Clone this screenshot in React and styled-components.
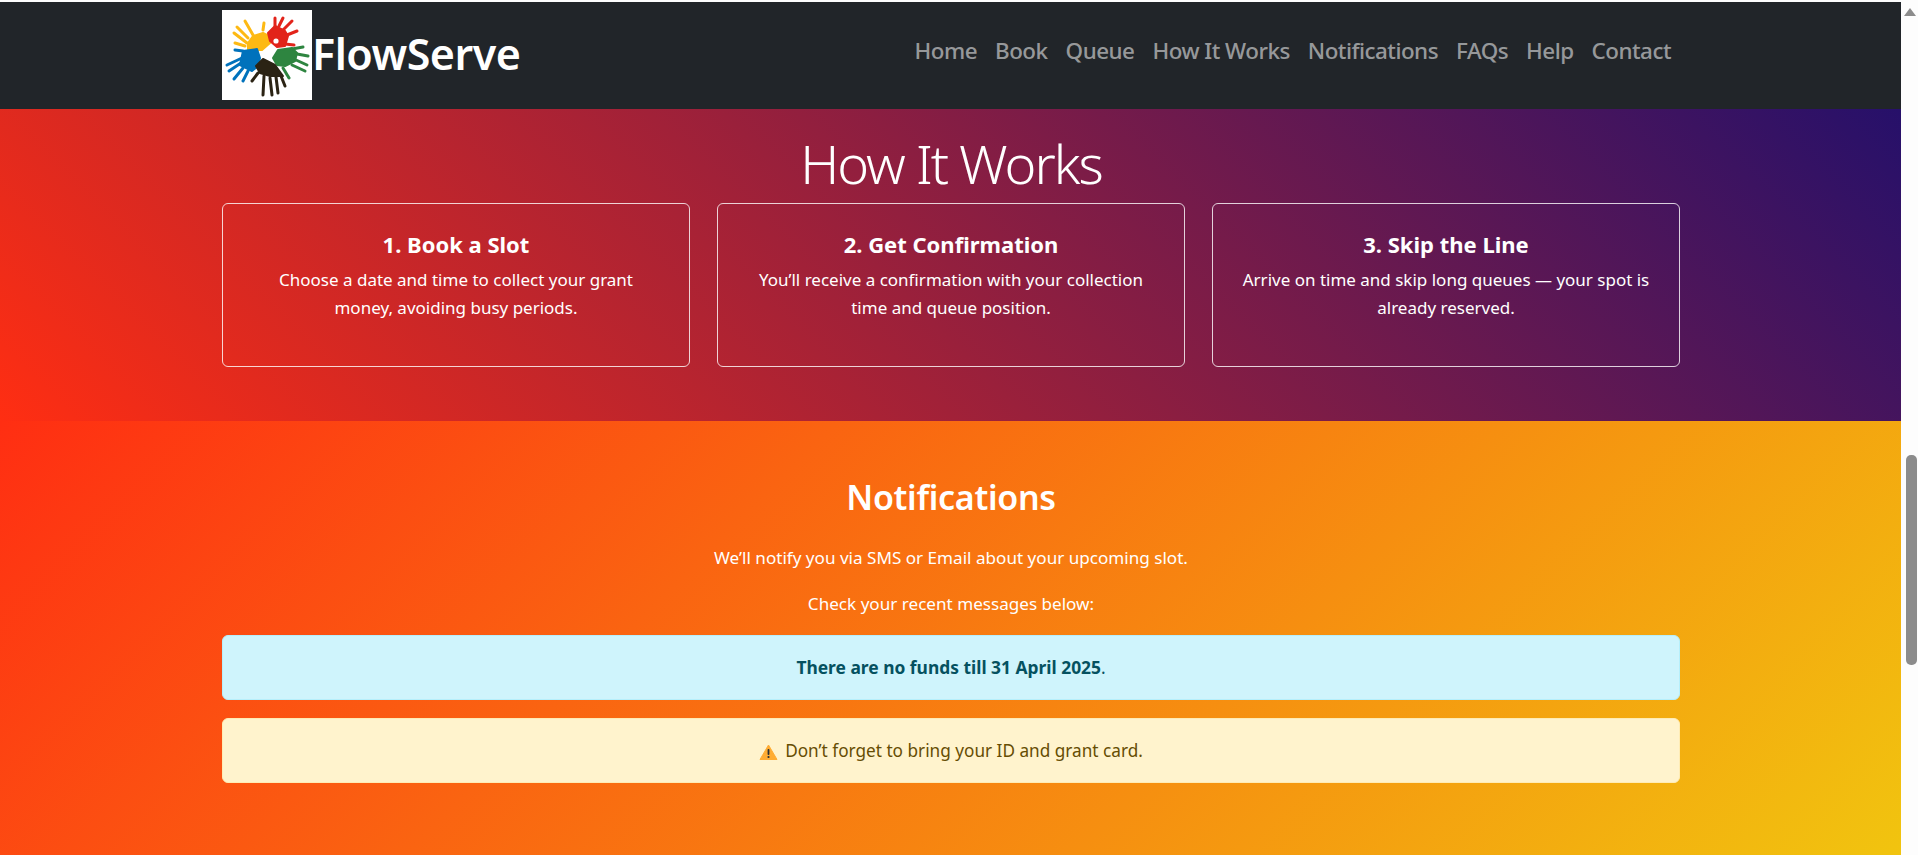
import styled, { createGlobalStyle } from 'styled-components'

const GlobalStyle = createGlobalStyle`
  html, body {
    margin: 0;
    height: 100%;
    overflow: hidden;
    background: #fdfdfd;
  }
  * {
    box-sizing: border-box;
  }
`

const navLinks = ['Home', 'Book', 'Queue', 'How It Works', 'Notifications', 'FAQs', 'Help', 'Contact']

const steps = [
  {
    title: '1. Book a Slot',
    lines: ['Choose a date and time to collect your grant', 'money, avoiding busy periods.'],
  },
  {
    title: '2. Get Confirmation',
    lines: ['You’ll receive a confirmation with your collection', 'time and queue position.'],
  },
  {
    title: '3. Skip the Line',
    lines: ['Arrive on time and skip long queues — your spot is', 'already reserved.'],
  },
]

//#region logo hands, traced from the reference
const hands = [
  {
    color: '#fdb913',
    palm: '26,33 31,26 41,23 45,25 48,33 40,40 26,40',
    fingers: [[31, 25, 23, 11], [26, 28, 15, 17], [25, 33, 12, 23], [23, 36, 13, 33], [41, 20, 42, 13]],
  },
  {
    color: '#e2231a',
    palm: '46,23 53,16 63,21 66,26 63,36 55,37 48,31',
    fingers: [[53, 16, 53, 8], [57, 16, 61, 8], [61, 20, 70, 11], [65, 25, 75, 21], [63, 34, 72, 35]],
  },
  {
    color: '#2e8540',
    palm: '51,48 56,40 70,38 75,43 73,51 63,56 55,55',
    fingers: [[70, 39, 81, 37], [75, 44, 86, 46], [74, 50, 85, 55], [70, 55, 83, 61], [61, 58, 67, 68]],
  },
  {
    color: '#0072bc',
    palm: '21,41 35,39 38,48 36,56 30,61 18,55',
    fingers: [[20, 48, 5, 55], [19, 53, 7, 61], [21, 58, 12, 69], [26, 61, 21, 71], [21, 41, 13, 40]],
  },
  {
    color: '#2b2314',
    palm: '34,56 41,49 53,55 61,66 48,66 38,63',
    fingers: [[42, 66, 41, 85], [48, 68, 50, 85], [54, 67, 56, 83], [59, 66, 63, 76], [36, 63, 30, 71]],
  },
]
//#endregion

function Logo() {
  return (
    <LogoBox viewBox="0 0 90 90" aria-label="FlowServe logo">
      {hands.map(({ color, palm, fingers }) => (
        <g key={color} fill={color} stroke={color} strokeLinecap="round" strokeLinejoin="round">
          <polygon points={palm} strokeWidth="2" />
          {fingers.map(([x1, y1, x2, y2]) => (
            <line key={`${x2}-${y2}`} x1={x1} y1={y1} x2={x2} y2={y2} strokeWidth="3" />
          ))}
        </g>
      ))}
      <circle cx="54" cy="31" r="2.6" fill="#fff" />
    </LogoBox>
  )
}

function WarningIcon() {
  return (
    <WarnSvg viewBox="0 0 18 16">
      <path d="M9 1 L17.5 15.5 L0.5 15.5 Z" fill="#ffac33" stroke="#ffac33" strokeLinejoin="round" />
      <rect x="8.1" y="5" width="1.8" height="6" rx="0.8" fill="#292f33" />
      <circle cx="9" cy="13" r="1.1" fill="#292f33" />
    </WarnSvg>
  )
}

export default function App() {
  return (
    <>
      <GlobalStyle />
      <Viewport>
        <Main>
          <Navbar>
            <Brand>
              <Logo />
              <BrandName>FlowServe</BrandName>
            </Brand>
            <NavList>
              {navLinks.map((label) => (
                <NavLink key={label}>{label}</NavLink>
              ))}
            </NavList>
          </Navbar>
          <HowSection>
            <HowTitle>How It Works</HowTitle>
            <CardGrid>
              {steps.map(({ title, lines }) => (
                <StepCard key={title}>
                  <StepTitle>{title}</StepTitle>
                  {lines.map((line) => (
                    <StepLine key={line}>{line}</StepLine>
                  ))}
                </StepCard>
              ))}
            </CardGrid>
          </HowSection>
          <NotifySection>
            <NotifyTitle>Notifications</NotifyTitle>
            <NotifyText>We’ll notify you via SMS or Email about your upcoming slot.</NotifyText>
            <NotifyText>Check your recent messages below:</NotifyText>
            <Alert $kind="info">
              <AlertStrong>There are no funds till 31 April 2025</AlertStrong>.
            </Alert>
            <Alert $kind="warning">
              <WarningIcon />Don’t forget to bring your ID and grant card.
            </Alert>
          </NotifySection>
        </Main>
        <ScrollRail>
          <ScrollArrow />
          <ScrollThumb />
        </ScrollRail>
      </Viewport>
    </>
  )
}

const alertColors = {
  info: { bg: '#cff4fc', fg: '#055160', border: '#b6effb' },
  warning: { bg: '#fff3cd', fg: '#664d03', border: '#ffecb5' },
}

const Viewport = styled.div`
  display: flex;
  height: 855px;
  padding-top: 2px;
  overflow: hidden;
  font-family: "Noto Sans", "Open Sans", sans-serif;
`

const Main = styled.main`
  flex: 1;
  min-width: 0;
  display: flex;
  flex-direction: column;
`

const Navbar = styled.nav`
  height: 107px;
  flex: none;
  padding: 8px 230px 0 222px;
  background: #212529;
  display: flex;
  justify-content: space-between;
  align-items: flex-start;
`

const Brand = styled.div`
  display: flex;
  align-items: center;
  height: 90px;
`

const LogoBox = styled.svg`
  width: 90px;
  height: 90px;
  background: #fff;
`

const BrandName = styled.span`
  color: #fff;
  font-size: 43px;
  font-weight: 600;
  letter-spacing: -0.5px;
  margin-top: -3px;
`

const NavList = styled.div`
  display: flex;
  height: 80px;
  align-items: center;
  gap: 18px;
`

const NavLink = styled.a`
  color: rgba(255, 255, 255, 0.55);
  font-size: 22.4px;
  font-weight: 500;
  letter-spacing: -0.5px;
`

const HowSection = styled.section`
  height: 312px;
  flex: none;
  padding: 23px 221px 0 222px;
  background: linear-gradient(45deg, #ff2e12, #26106a);
  color: #fff;
`

const HowTitle = styled.h1`
  margin: 0 0 9px;
  text-align: center;
  font-size: 54px;
  font-weight: 300;
  line-height: 62px;
  letter-spacing: -2px;
`

const CardGrid = styled.div`
  display: grid;
  grid-template-columns: repeat(3, 1fr);
  gap: 27px;
`

const StepCard = styled.div`
  height: 164px;
  padding: 27px 0 0;
  border: 1px solid rgba(255, 255, 255, 0.8);
  border-radius: 6px;
  text-align: center;
`

const StepTitle = styled.h5`
  margin: 0 0 9px;
  font-size: 22px;
  font-weight: 700;
  line-height: 1.2;
`

const StepLine = styled.div`
  font-size: 17px;
  line-height: 28px;
  white-space: nowrap;
`

const NotifySection = styled.section`
  flex: 1;
  padding: 56px 221px 0 222px;
  background: linear-gradient(135deg, #ff2e12, #f1c40f);
  color: #fff;
  text-align: center;
`

const NotifyTitle = styled.h2`
  margin: 0 0 26px;
  font-size: 34px;
  font-weight: 600;
  line-height: 41px;
  letter-spacing: -0.3px;
`

const NotifyText = styled.p`
  margin: 0 0 18px;
  font-size: 17.1px;
  line-height: 28px;

  & + & {
    margin-bottom: 17px;
  }
`

const Alert = styled.div`
  height: 65px;
  margin-bottom: 18px;
  line-height: 63px;
  font-size: 17.2px;
  border-radius: 6px;
  background: ${({ $kind }) => alertColors[$kind].bg};
  color: ${({ $kind }) => alertColors[$kind].fg};
  border: 1px solid ${({ $kind }) => alertColors[$kind].border};
`

const AlertStrong = styled.strong`
  font-size: 17.4px;
`

const WarnSvg = styled.svg`
  width: 19px;
  height: 16px;
  margin-right: 7px;
  vertical-align: -3px;
`

const ScrollRail = styled.aside`
  width: 17px;
  flex: none;
  display: flex;
  flex-direction: column;
  align-items: center;
  background: #fdfdfd;
`

const ScrollArrow = styled.div`
  flex: none;
  width: 0;
  height: 0;
  margin-top: 6px;
  border-left: 6px solid transparent;
  border-right: 6px solid transparent;
  border-bottom: 8px solid #8c8c8c;
`

const ScrollThumb = styled.div`
  flex: none;
  width: 11px;
  height: 210px;
  margin-top: 439px;
  margin-left: 3px;
  border-radius: 5px;
  background: #8c8c8c;
`
